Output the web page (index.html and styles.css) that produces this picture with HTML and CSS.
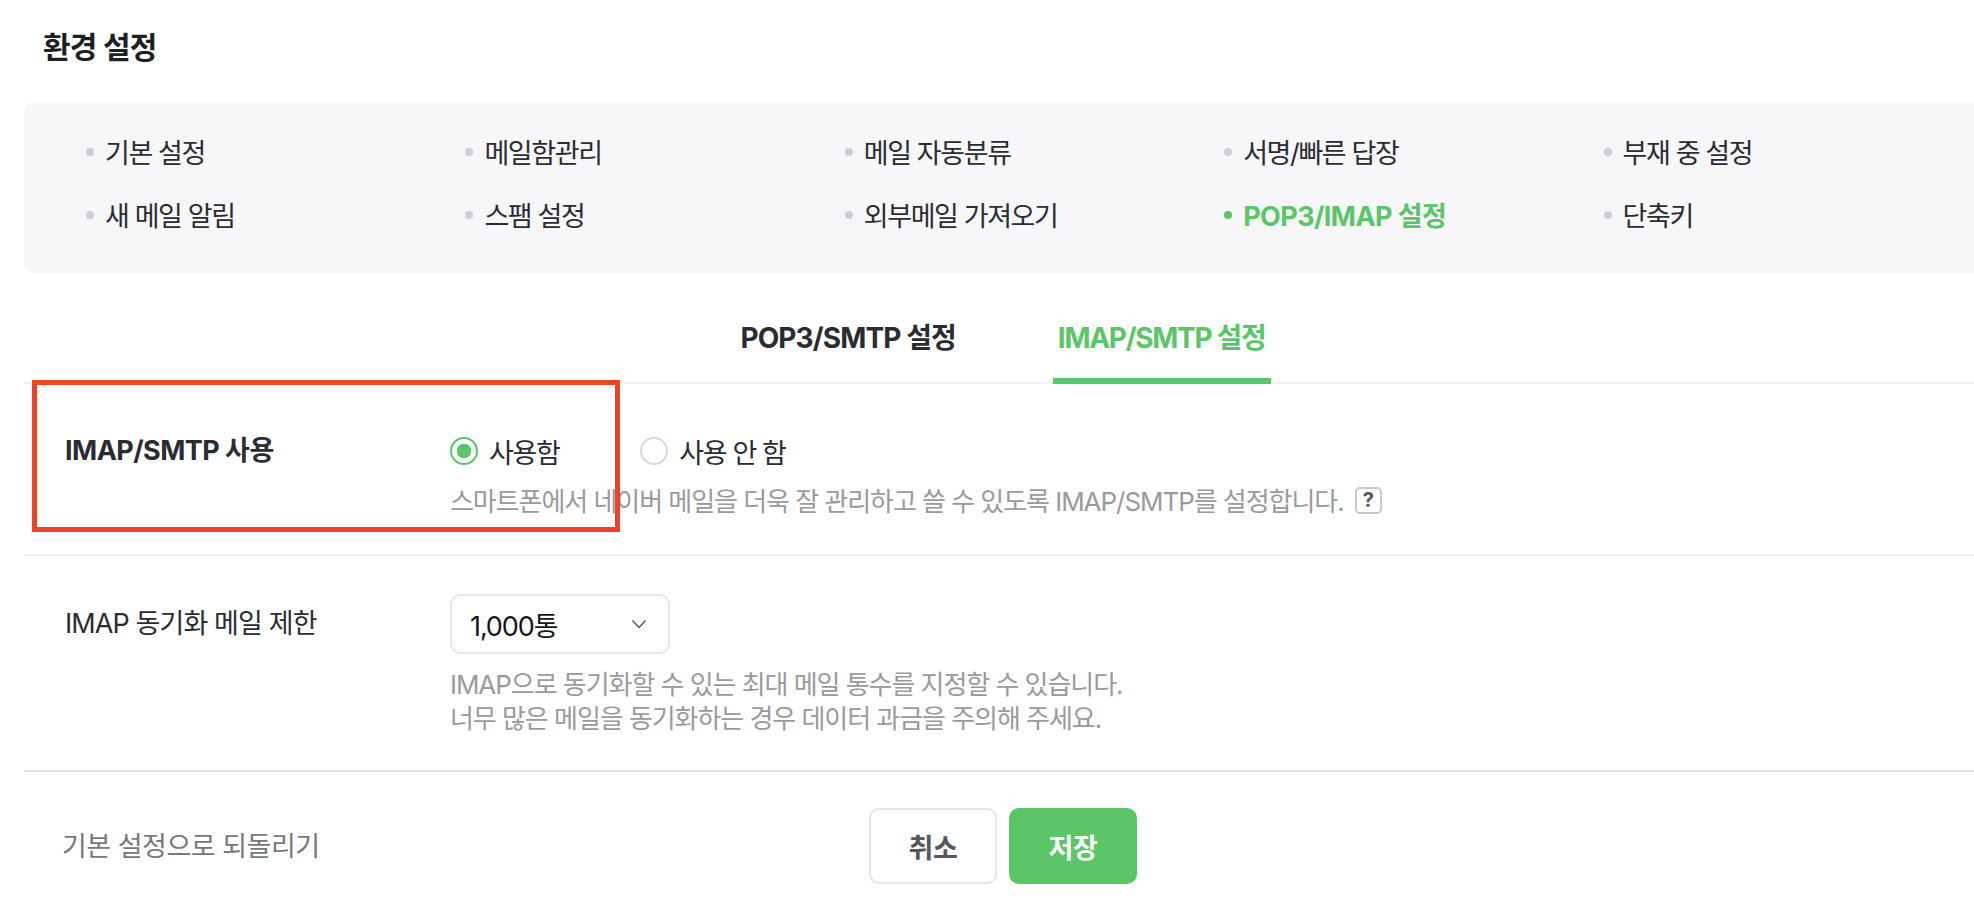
FILE: index.html
```html
<!DOCTYPE html>
<html lang="ko">
<head>
    <meta charset="UTF-8">
    <meta name="viewport" content="width=device-width, initial-scale=1.0">
    <title>환경 설정</title>
    <link rel="stylesheet" href="styles.css">
</head>
<body>
    <div class="page">
        <h1 class="page-title">환경 설정</h1>

        <ul class="menu">
            <li class="menu-item">기본 설정</li>
            <li class="menu-item">메일함관리</li>
            <li class="menu-item">메일 자동분류</li>
            <li class="menu-item">서명/빠른 답장</li>
            <li class="menu-item">부재 중 설정</li>
            <li class="menu-item">새 메일 알림</li>
            <li class="menu-item">스팸 설정</li>
            <li class="menu-item">외부메일 가져오기</li>
            <li class="menu-item active">POP3/IMAP 설정</li>
            <li class="menu-item">단축키</li>
        </ul>

        <div class="tabs">
            <a class="tab">POP3/SMTP 설정</a>
            <a class="tab active">IMAP/SMTP 설정</a>
        </div>

        <div class="row row-first">
            <div class="row-label strong">IMAP/SMTP 사용</div>
            <div class="row-body">
                <div class="radios">
                    <label class="radio"><span class="radio-mark checked"></span>사용함</label>
                    <label class="radio"><span class="radio-mark"></span>사용 안 함</label>
                </div>
                <p class="help help-first">스마트폰에서 네이버 메일을 더욱 잘 관리하고 쓸 수 있도록 IMAP/SMTP를 설정합니다. <span class="help-icon">?</span></p>
            </div>
        </div>

        <div class="row row-second">
            <div class="row-label tall">IMAP 동기화 메일 제한</div>
            <div class="row-body">
                <div class="select">
                    <span>1,000통</span>
                    <svg width="16" height="10" viewBox="0 0 16 10" fill="none" stroke="#55565e" stroke-width="1.5"><path d="M1.5 1.5 8 8.5l6.5-7"/></svg>
                </div>
                <p class="help">IMAP으로 동기화할 수 있는 최대 메일 통수를 지정할 수 있습니다.<br>너무 많은 메일을 동기화하는 경우 데이터 과금을 주의해 주세요.</p>
            </div>
        </div>

        <div class="footer">
            <a class="reset">기본 설정으로 되돌리기</a>
            <div class="buttons">
                <button class="btn" type="button">취소</button>
                <button class="btn btn-save" type="button">저장</button>
            </div>
        </div>
    </div>

    <div class="highlight"></div>
</body>
</html>
```

FILE: styles.css
```css
html, body {
    margin: 0;
    padding: 0;
    height: 100%;
    overflow: hidden;
    background: #fff;
}

body {
    font-family: Inter, "Noto Sans CJK KR", sans-serif;
    color: #2b2c33;
}

.page {
    width: 1958px;
    margin-left: 24px;
}

.page-title {
    margin: 0;
    height: 102px;
    padding: 27px 0 0 19px;
    box-sizing: border-box;
    font-size: 30px;
    line-height: 40px;
    font-weight: 700;
    letter-spacing: -0.8px;
    color: #1e1f24;
}

/* settings menu */
.menu {
    display: grid;
    grid-template-columns: repeat(5, 379.4px);
    grid-auto-rows: 63px;
    box-sizing: border-box;
    height: 171px;
    margin: 0;
    padding: 18px 0 0 62px;
    list-style: none;
    background: #f7f7fa;
    border-radius: 10px;
}

.menu-item {
    display: flex;
    align-items: center;
    gap: 11px;
    font-size: 27px;
    letter-spacing: -1.4px;
    color: #2b2c33;
}

.menu-item::before {
    content: "";
    width: 8px;
    height: 8px;
    border-radius: 50%;
    background: #cdced7;
}

.menu-item.active {
    font-weight: 700;
    letter-spacing: -0.6px;
    color: #5bc568;
}

.menu-item.active::before {
    background: #5bc568;
}

/* tabs */
.tabs {
    display: flex;
    justify-content: center;
    gap: 92px;
    height: 111px;
    box-sizing: border-box;
    border-bottom: 2px solid #f2f2f4;
}

.tab {
    height: 111px;
    box-sizing: border-box;
    padding: 46px 5px 0;
    font-size: 28px;
    line-height: 38px;
    font-weight: 700;
    letter-spacing: -0.9px;
    color: #2b2c33;
}

.tab.active {
    letter-spacing: -1.3px;
    color: #5bc568;
    border-bottom: 6px solid #5bc568;
}

/* form rows */
.row {
    display: flex;
    padding-left: 41px;
    box-sizing: border-box;
    border-bottom: 2px solid #f2f2f4;
}

.row-first {
    height: 172px;
    padding-top: 47px;
}

.row-second {
    height: 216px;
    padding-top: 38px;
    border-bottom-color: #e0e0e2;
}

.row-label {
    width: 385px;
    font-size: 27px;
    line-height: 40px;
    letter-spacing: -0.9px;
}

.row-label.strong {
    font-weight: 700;
    letter-spacing: -0.55px;
}

.row-label.tall {
    line-height: 60px;
}

.radios {
    display: flex;
    gap: 81px;
    height: 40px;
}

.radio {
    display: flex;
    align-items: center;
    gap: 11px;
    font-size: 27px;
    letter-spacing: -1.4px;
}

.radio-mark {
    box-sizing: border-box;
    width: 28px;
    height: 28px;
    border: 2px solid #d5d8e8;
    border-radius: 50%;
    background: #fff;
}

.radio-mark.checked {
    border-color: #5bc568;
    background: radial-gradient(circle, #5bc568 0 7px, #fff 7.5px);
}

.help {
    margin: 0;
    font-size: 26px;
    line-height: 34px;
    letter-spacing: -1.05px;
    color: #999a9e;
}

.help-first {
    margin-top: 14px;
}

.help-icon {
    display: inline-block;
    box-sizing: border-box;
    width: 27px;
    height: 27px;
    margin-left: 5px;
    border: 2px solid #c9c9cd;
    border-radius: 5px;
    font-size: 20px;
    line-height: 22px;
    font-weight: 700;
    letter-spacing: 0;
    text-align: center;
    color: #55565e;
    vertical-align: 4px;
}

.select {
    display: flex;
    align-items: center;
    justify-content: space-between;
    box-sizing: border-box;
    width: 220px;
    height: 60px;
    padding: 0 21px 0 18px;
    margin-bottom: 14px;
    border: 2px solid #e6e7ec;
    border-radius: 10px;
    font-size: 27px;
    letter-spacing: -1.1px;
    color: #16171b;
}

/* bottom bar */
.footer {
    position: relative;
    display: flex;
    justify-content: center;
    padding-top: 36px;
}

.reset {
    position: absolute;
    left: 38px;
    top: 56px;
    font-size: 27px;
    line-height: 38px;
    letter-spacing: -0.5px;
    color: #77787c;
}

.buttons {
    display: flex;
    gap: 12px;
}

.btn {
    width: 128px;
    height: 76px;
    box-sizing: border-box;
    border: 2px solid #e5e5ea;
    border-radius: 10px;
    background: #fff;
    font-family: inherit;
    font-size: 27px;
    font-weight: 700;
    letter-spacing: -0.3px;
    color: #55565e;
}

.btn-save {
    border-color: #5bc568;
    background: #5bc568;
    color: #fff;
}

/* red annotation box drawn over the screenshot */
.highlight {
    position: absolute;
    left: 32px;
    top: 380px;
    width: 588px;
    height: 152px;
    box-sizing: border-box;
    border: 5px solid #eb4427;
}
```
